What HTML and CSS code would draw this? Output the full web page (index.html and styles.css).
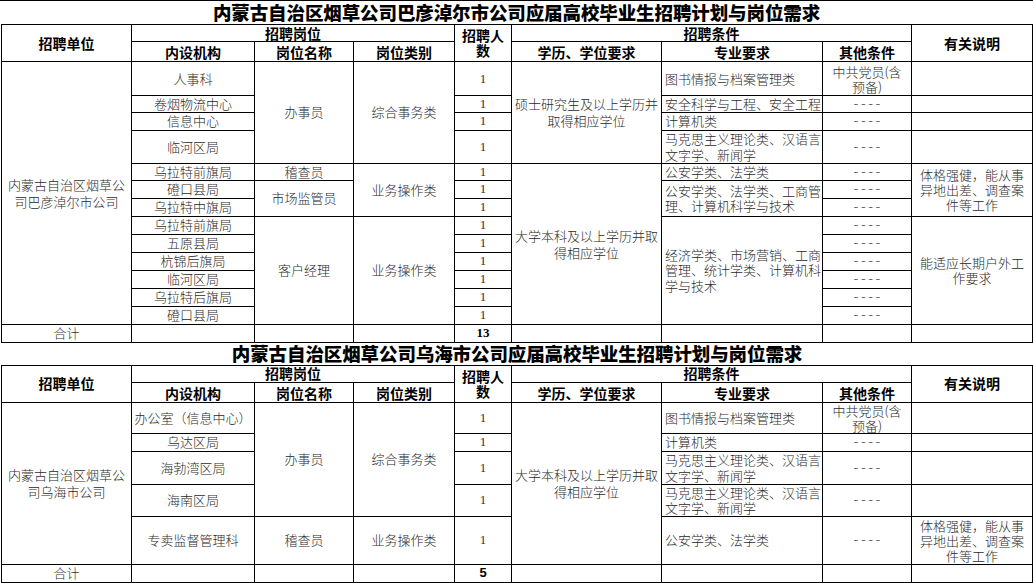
FILE: index.html
```html
<!DOCTYPE html>
<html lang="zh-CN">
<head>
<meta charset="utf-8">
<title>招聘计划与岗位需求</title>
<link rel="stylesheet" href="styles.css">
</head>
<body>
<div class="page">
  <div class="title first">内蒙古自治区烟草公司巴彦淖尔市公司应届高校毕业生招聘计划与岗位需求</div>
  <table class="plan">
    <colgroup>
      <col class="c-unit"><col class="c-dept"><col class="c-post"><col class="c-type"><col class="c-num">
      <col class="c-edu"><col class="c-major"><col class="c-other"><col class="c-note">
    </colgroup>
    <tr class="h1">
      <th rowspan="2">招聘单位</th><th colspan="3">招聘岗位</th><th rowspan="2" class="narrow">招聘人数</th>
      <th colspan="3">招聘条件</th><th rowspan="2">有关说明</th>
    </tr>
    <tr class="h2">
      <th>内设机构</th><th>岗位名称</th><th>岗位类别</th><th>学历、学位要求</th><th>专业要求</th><th>其他条件</th>
    </tr>
    <tr class="r34">
      <td rowspan="13" class="unit">内蒙古自治区烟草公司巴彦淖尔市公司</td>
      <td>人事科</td>
      <td rowspan="4">办事员</td>
      <td rowspan="4">综合事务类</td>
      <td class="num">1</td>
      <td rowspan="4" class="edu">硕士研究生及以上学历并取得相应学位</td>
      <td class="major">图书情报与档案管理类</td>
      <td class="other">中共党员(含预备)</td>
      <td class="note"></td>
    </tr>
    <tr class="r16">
      <td>卷烟物流中心</td><td class="num">1</td>
      <td class="major">安全科学与工程、安全工程</td><td class="dash">----</td><td class="note"></td>
    </tr>
    <tr class="r18">
      <td>信息中心</td><td class="num">1</td>
      <td class="major">计算机类</td><td class="dash">----</td><td class="note"></td>
    </tr>
    <tr class="r33">
      <td>临河区局</td><td class="num">1</td>
      <td class="major">马克思主义理论类、汉语言文字学、新闻学</td><td class="dash">----</td><td class="note"></td>
    </tr>
    <tr class="r17">
      <td>乌拉特前旗局</td>
      <td>稽查员</td>
      <td rowspan="3">业务操作类</td>
      <td class="num">1</td>
      <td rowspan="9" class="edu">大学本科及以上学历并取得相应学位</td>
      <td class="major">公安学类、法学类</td>
      <td class="dash">----</td>
      <td rowspan="3" class="note">体格强健，能从事异地出差、调查案件等工作</td>
    </tr>
    <tr class="r18">
      <td>磴口县局</td>
      <td rowspan="2">市场监管员</td>
      <td class="num">1</td>
      <td rowspan="2" class="major">公安学类、法学类、工商管理、计算机科学与技术</td>
      <td class="dash">----</td>
    </tr>
    <tr class="r18">
      <td>乌拉特中旗局</td><td class="num">1</td><td class="dash">----</td>
    </tr>
    <tr class="r18">
      <td>乌拉特前旗局</td>
      <td rowspan="6">客户经理</td>
      <td rowspan="6">业务操作类</td>
      <td class="num">1</td>
      <td rowspan="6" class="major">经济学类、市场营销、工商管理、统计学类、计算机科学与技术</td>
      <td class="dash">----</td>
      <td rowspan="6" class="note">能适应长期户外工作要求</td>
    </tr>
    <tr class="r18"><td>五原县局</td><td class="num">1</td><td class="dash">----</td></tr>
    <tr class="r18"><td>杭锦后旗局</td><td class="num">1</td><td class="dash">----</td></tr>
    <tr class="r18"><td>临河区局</td><td class="num">1</td><td class="dash">----</td></tr>
    <tr class="r18"><td>乌拉特后旗局</td><td class="num">1</td><td class="dash">----</td></tr>
    <tr class="r18"><td>磴口县局</td><td class="num">1</td><td class="dash">----</td></tr>
    <tr class="r18 total">
      <td>合计</td><td></td><td></td><td></td><td class="num sum">13</td><td></td><td></td><td></td><td></td>
    </tr>
  </table>

  <div class="title second">内蒙古自治区烟草公司乌海市公司应届高校毕业生招聘计划与岗位需求</div>
  <table class="plan">
    <colgroup>
      <col class="c-unit"><col class="c-dept"><col class="c-post"><col class="c-type"><col class="c-num">
      <col class="c-edu"><col class="c-major"><col class="c-other"><col class="c-note">
    </colgroup>
    <tr class="h1">
      <th rowspan="2">招聘单位</th><th colspan="3">招聘岗位</th><th rowspan="2" class="narrow">招聘人数</th>
      <th colspan="3">招聘条件</th><th rowspan="2">有关说明</th>
    </tr>
    <tr class="h2">
      <th>内设机构</th><th>岗位名称</th><th>岗位类别</th><th>学历、学位要求</th><th>专业要求</th><th>其他条件</th>
    </tr>
    <tr class="r31">
      <td rowspan="5" class="unit">内蒙古自治区烟草公司乌海市公司</td>
      <td>办公室（信息中心）</td>
      <td rowspan="4">办事员</td>
      <td rowspan="4">综合事务类</td>
      <td class="num">1</td>
      <td rowspan="5" class="edu">大学本科及以上学历并取得相应学位</td>
      <td class="major">图书情报与档案管理类</td>
      <td class="other">中共党员(含预备)</td>
      <td class="note"></td>
    </tr>
    <tr class="r18">
      <td>乌达区局</td><td class="num">1</td>
      <td class="major">计算机类</td><td class="dash">----</td><td class="note"></td>
    </tr>
    <tr class="r33">
      <td>海勃湾区局</td><td class="num">1</td>
      <td class="major">马克思主义理论类、汉语言文字学、新闻学</td><td class="dash">----</td><td class="note"></td>
    </tr>
    <tr class="r32">
      <td>海南区局</td><td class="num">1</td>
      <td class="major">马克思主义理论类、汉语言文字学、新闻学</td><td class="dash">----</td><td class="note"></td>
    </tr>
    <tr class="r48">
      <td>专卖监督管理科</td><td>稽查员</td><td>业务操作类</td><td class="num">1</td>
      <td class="major">公安学类、法学类</td><td class="dash">----</td>
      <td class="note">体格强健，能从事异地出差、调查案件等工作</td>
    </tr>
    <tr class="r18 total">
      <td>合计</td><td></td><td></td><td></td><td class="num sum sans">5</td><td></td><td></td><td></td><td></td>
    </tr>
  </table>
</div>
</body>
</html>
```

FILE: styles.css
```css
html, body {
  margin: 0;
  padding: 0;
  background: #fff;
}

body {
  font-family: "Noto Sans CJK SC", "Noto Sans", sans-serif;
  color: #222;
}

.page {
  width: 1033px;
  padding-left: 1px;
  box-sizing: border-box;
}

.title {
  height: 22px;
  line-height: 21px;
  text-align: center;
  font-size: 18.5px;
  font-weight: 900;
  color: #000;
  letter-spacing: -0.1px;
  overflow: hidden;
}

.title.first {
  height: 23px;
  line-height: 22px;
  border-top: 1px solid #000;
  margin-left: -1px;
}

.plan {
  border-collapse: collapse;
  table-layout: fixed;
  width: 1031px;
}

.c-unit { width: 130px; }
.c-dept { width: 123px; }
.c-post { width: 99px; }
.c-type { width: 101px; }
.c-num { width: 57px; }
.c-edu { width: 150px; }
.c-major { width: 161px; }
.c-other { width: 89px; }
.c-note { width: 121px; }

.plan th,
.plan td {
  border: 1px solid #000;
  padding: 0 2px;
  text-align: center;
  vertical-align: middle;
}

.plan th {
  font-size: 14px;
  font-weight: 700;
  line-height: 15px;
  color: #000;
}

.plan th.narrow {
  padding: 0 5px;
}

.h1 { height: 17px; }
.h2 { height: 20px; }
.h2 th { vertical-align: bottom; padding-bottom: 1px; }

.plan td {
  font-size: 13px;
  font-weight: 300;
  line-height: 14px;
  color: #2a2a2a;
}

.r16 { height: 16px; }
.r17 { height: 17px; }
.r18 { height: 18px; }
.r31 { height: 31px; }
.r32 { height: 32px; }
.r33 { height: 33px; }
.r34 { height: 34px; }
.r48 { height: 48px; }

.plan td.unit { padding: 0 4px; line-height: 17px; }
.plan td.edu { padding: 0 3px; line-height: 17px; }

.plan td.major {
  text-align: left;
  padding: 0 1px 0 3px;
  line-height: 15.5px;
}

.plan td.other { padding: 0 4px; line-height: 15px; }

.plan td.note { padding: 0 5px; line-height: 15px; }

.plan td.dash {
  font-family: "Liberation Serif", serif;
  color: #666;
  letter-spacing: 3px;
  font-size: 13px;
  padding-left: 5px;
}

.plan td.num {
  font-family: "Liberation Serif", serif;
  font-weight: 400;
  color: #333;
}

.plan td.sum {
  font-weight: 700;
  color: #000;
}

.plan td.sum.sans {
  font-family: "Liberation Sans", sans-serif;
}

.total td { color: #333; }
```
